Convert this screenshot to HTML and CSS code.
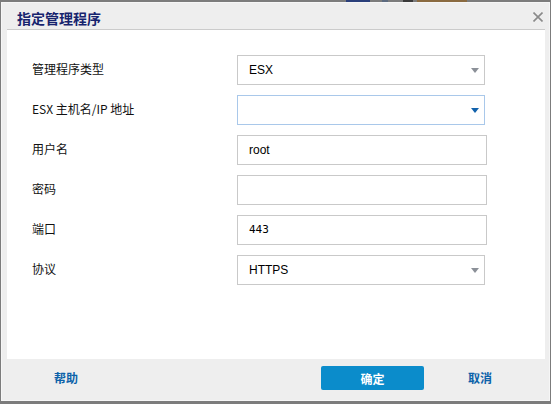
FILE: index.html
```html
<!DOCTYPE html>
<html lang="zh-CN">
<head>
<meta charset="utf-8">
<title>指定管理程序</title>
<link rel="stylesheet" href="styles.css">
</head>
<body>
<div class="strip">
  <span class="bit b1"></span>
  <span class="bit b2"></span>
  <span class="bit b3"></span>
  <span class="bit b4"></span>
</div>
<div class="dialog">
  <div class="titlebar">
    <span class="title">指定管理程序</span>
    <svg class="close" width="10" height="10" viewBox="0 0 10 10">
      <path d="M0.5 0.5 L9.5 9.5 M9.5 0.5 L0.5 9.5" stroke="#8a8a8a" stroke-width="1.6" fill="none"/>
    </svg>
  </div>
  <div class="body">
    <div class="row">
      <label class="lbl">管理程序类型</label>
      <div class="field select"><span class="val">ESX</span><span class="arrow"></span></div>
    </div>
    <div class="row">
      <label class="lbl">ESX 主机名/IP 地址</label>
      <div class="field select focus"><span class="val"></span><span class="arrow blue"></span></div>
    </div>
    <div class="row">
      <label class="lbl">用户名</label>
      <div class="field text"><span class="val">root</span></div>
    </div>
    <div class="row">
      <label class="lbl">密码</label>
      <div class="field text"><span class="val"></span></div>
    </div>
    <div class="row">
      <label class="lbl">端口</label>
      <div class="field text"><span class="val mono">443</span></div>
    </div>
    <div class="row">
      <label class="lbl">协议</label>
      <div class="field select"><span class="val">HTTPS</span><span class="arrow"></span></div>
    </div>
  </div>
  <div class="footer">
    <div class="left"><span class="link">帮助</span></div>
    <div class="btn">确定</div>
    <div class="right"><span class="link">取消</span></div>
  </div>
</div>
</body>
</html>
```
FILE: styles.css
```css
html, body {
  margin: 0;
  padding: 0;
}
body {
  background: #7c7c7c;
  width: 551px;
  height: 404px;
  overflow: hidden;
  font-family: "Noto Sans CJK SC", "Liberation Sans", sans-serif;
}
.strip {
  height: 2px;
  display: flex;
}
.bit {
  display: block;
  height: 2px;
}
.b1 { margin-left: 346px; width: 24px; background: #2a3f7a; }
.b2 { margin-left: 12px; width: 6px; background: #5d6b80; }
.b3 { margin-left: 15px; width: 10px; background: #3a3a3a; }
.b4 { margin-left: 4px; width: 50px; background: #8a6a40; }

.dialog {
  margin-left: 1px;
  width: 549px;
  height: 399px;
  box-sizing: border-box;
  border: 1px solid #f6f6f6;
  background: #eeeeee;
  display: flex;
  flex-direction: column;
}
.titlebar {
  height: 26px;
  display: flex;
  align-items: center;
  padding-left: 15px;
  padding-right: 5px;
}
.title {
  font-size: 14px;
  font-weight: 700;
  color: #17246e;
  line-height: 14px;
  margin-top: 4px;
  flex: 1;
}
.close {
  margin-top: 2px;
  margin-right: 1px;
}
.body {
  margin-left: 5px;
  width: 538px;
  height: 330px;
  box-sizing: border-box;
  border-top: 1px solid #cbcbcb;
  background: #ffffff;
  padding: 25px 0 0 25px;
  display: flex;
  flex-direction: column;
  gap: 10px;
}
.row {
  display: flex;
  align-items: center;
  height: 30px;
}
.lbl {
  width: 205px;
  font-size: 12px;
  color: #111;
  line-height: 14px;
  margin-top: -2px;
}
.field {
  height: 30px;
  box-sizing: border-box;
  border: 1px solid #c9c9c9;
  background: #fff;
  display: flex;
  align-items: center;
  padding-left: 11px;
}
.field.text { width: 250px; }
.field.select { width: 248px; padding-right: 5px; }
.field.focus { border-color: #a9c8ea; }
.val {
  flex: 1;
  font-family: "Liberation Sans", "DejaVu Sans", sans-serif;
  font-size: 12px;
  color: #000;
  line-height: 14px;
}
.val.mono {
  font-family: "DejaVu Sans Mono", "Liberation Mono", monospace;
  font-size: 11px;
}
.arrow {
  width: 0;
  height: 0;
  border-left: 4.5px solid transparent;
  border-right: 4.5px solid transparent;
  border-top: 5px solid #8b9098;
  margin-top: 1px;
}
.arrow.blue { border-top-color: #1262ac; }

.footer {
  flex: 1;
  display: flex;
  align-items: flex-start;
  padding-top: 7px;
}
.left {
  width: 319px;
  padding-left: 52px;
  box-sizing: border-box;
  height: 24px;
  display: flex;
  align-items: center;
}
.right {
  padding-left: 44px;
  height: 24px;
  display: flex;
  align-items: center;
}
.link {
  font-size: 12px;
  font-weight: 700;
  color: #0c62a9;
  line-height: 14px;
}
.btn {
  width: 103px;
  height: 24px;
  border-radius: 2px;
  background: #0b8ccb;
  color: #fff;
  font-size: 12px;
  font-weight: 700;
  display: flex;
  align-items: center;
  justify-content: center;
}
```
